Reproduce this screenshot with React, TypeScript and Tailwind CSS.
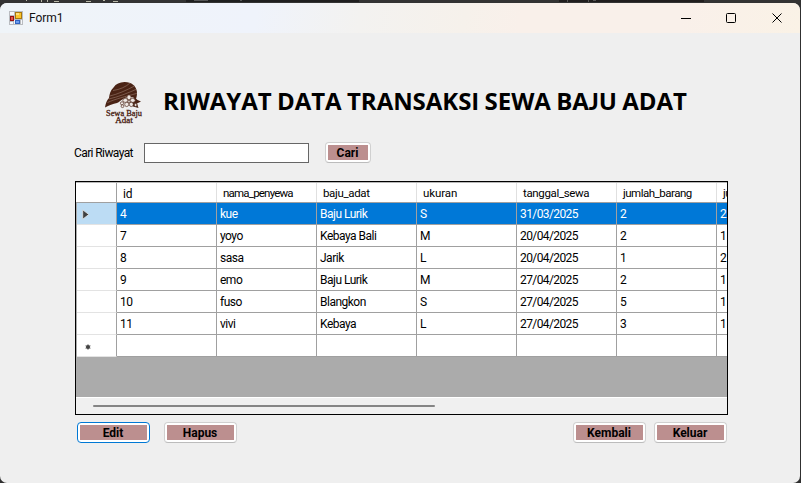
const ui = "font-['Roboto','Open_Sans',sans-serif]";

const columns = [
  { name: 'id', spacing: 'tracking-[-0.1px] text-[12px]' },
  { name: 'nama_penyewa', spacing: 'tracking-[-0.8px] text-[11.5px]' },
  { name: 'baju_adat', spacing: 'tracking-[-0.35px] text-[11.5px]' },
  { name: 'ukuran', spacing: 'tracking-[-0.1px] text-[11.5px]' },
  { name: 'tanggal_sewa', spacing: 'tracking-[-0.35px] text-[11.5px]' },
  { name: 'jumlah_barang', spacing: 'tracking-[-0.5px] text-[11.5px]' },
  { name: 'ju', spacing: 'tracking-[-0.45px] text-[11.5px]' },
];

const rows = [
  ['4', 'kue', 'Baju Lurik', 'S', '31/03/2025', '2', '2'],
  ['7', 'yoyo', 'Kebaya Bali', 'M', '20/04/2025', '2', '1'],
  ['8', 'sasa', 'Jarik', 'L', '20/04/2025', '1', '2'],
  ['9', 'emo', 'Baju Lurik', 'M', '27/04/2025', '2', '1'],
  ['10', 'fuso', 'Blangkon', 'S', '27/04/2025', '5', '1'],
  ['11', 'vivi', 'Kebaya', 'L', '27/04/2025', '3', '1'],
  ['', '', '', '', '', '', ''],
];

function FormIcon() {
  return (
    <svg width="14" height="14" viewBox="0 0 14 14" shapeRendering="crispEdges">
      <rect width="14" height="14" fill="#b9bcc0" />
      <rect x="1" y="1" width="4" height="3" fill="#f4f6fa" />
      <rect x="1" y="11" width="3" height="2" fill="#f4f6fa" />
      <rect x="12" y="9" width="1" height="4" fill="#f4f6fa" />
      <rect x="5" y="9" width="1" height="4" fill="#f4f6fa" />
      <rect x="6" y="1" width="7" height="7" fill="#a9780c" />
      <rect x="7" y="2" width="5" height="5" fill="#fbc52c" />
      <rect x="7" y="2" width="3" height="2" fill="#ffe07a" />
      <rect x="1" y="5" width="4" height="5" fill="#9c1010" />
      <rect x="2" y="6" width="2" height="3" fill="#e0564a" />
      <rect x="6" y="9" width="5" height="4" fill="#3164c0" />
      <rect x="7" y="10" width="3" height="2" fill="#6e9df0" />
    </svg>
  );
}

function Logo() {
  return (
    <svg width="40" height="46" viewBox="0 0 40 46">
      <path
        d="M1 28.5C1.6 24.5 2.6 21.5 5 19C5.5 14.5 6.5 11.5 9.5 8.5C12 5 15.5 3.3 20.5 3.1C27.5 3 32.2 7 32.9 12.5C33.2 15.5 32.8 18 31.8 20C28 17.3 23.5 17.5 19 20C16 21.7 15.5 23.3 13 24C9 25 5 26 1 28.5Z"
        fill="#4a2315"
      />
      <g fill="none" stroke="#a88d7f" strokeWidth="0.5">
        <path d="M5.8 17C13 15.5 23 11 30.5 7" />
        <path d="M4.8 20C14 18 24 14 32.3 10.3" />
        <path d="M3.5 23.5C11 20 22 17.5 33 14.3" />
        <path d="M9 11.5C16 10.5 22 7.8 26 4" />
      </g>
      <path d="M28 21.5L31 18.5L33.5 21L37 22.5L33 24.5L34.5 29L29 27.5L26 24.5Z" fill="#4a2315" />
      <g fill="#efe8e4" stroke="#4a2315" strokeWidth="0.65">
        <ellipse cx="25" cy="18.3" rx="2.1" ry="2.5" />
        <ellipse cx="28.7" cy="21.4" rx="2.5" ry="2" />
        <ellipse cx="27.3" cy="25.4" rx="2" ry="2.2" />
        <ellipse cx="22.7" cy="25.4" rx="2" ry="2.2" />
        <ellipse cx="21.3" cy="21.4" rx="2.5" ry="2" />
        <circle cx="25" cy="22.4" r="1.2" />
        <circle cx="18" cy="24.3" r="1.6" />
        <circle cx="18.5" cy="27.2" r="1.4" />
        <circle cx="31.6" cy="26" r="1.4" />
      </g>
      <g
        fill="#4a2315"
        stroke="#4a2315"
        strokeWidth="0.3"
        fontFamily="Liberation Serif, serif"
        fontSize="8"
        textAnchor="middle"
      >
        <text x="20" y="36.6" textLength="36" lengthAdjust="spacingAndGlyphs">Sewa Baju</text>
        <text x="20" y="43.9" textLength="17.5" lengthAdjust="spacingAndGlyphs">Adat</text>
      </g>
    </svg>
  );
}

function Button({ label, width, active }: { label: string; width: string; active?: boolean }) {
  return (
    <button
      className={`h-[21px] ${width} rounded-[4px] border bg-white p-[2px] ${
        active ? 'border-[#0078d4]' : 'border-[#d0d0d0] border-b-[#bcbcbc]'
      }`}
    >
      <span className="flex h-full items-center justify-center bg-[#bc8f8f] pr-px text-[12px] leading-none font-bold text-black">
        {label}
      </span>
    </button>
  );
}

function TitleBar() {
  return (
    <header className="flex h-[30px] items-center bg-[linear-gradient(100deg,#eff4f8_0%,#eff3fb_32%,#f3f2f0_45%,#f6f1eb_58%,#f9f0ea_65%,#f9f0ea_85%,#faf2e6_100%)] pl-[9px]">
      <FormIcon />
      <span className="ml-[6px] text-[12px] tracking-[-0.05px] text-[#111]">Form1</span>
      <svg className="ml-auto mr-[17px]" width="102" height="12" viewBox="0 0 102 12" fill="none" stroke="#000">
        <path d="M0 6.5H10" />
        <rect x="45.5" y="1.5" width="9" height="9" rx="1" />
        <path d="M91.5 1.5L100.5 10.5M100.5 1.5L91.5 10.5" />
      </svg>
    </header>
  );
}

function Grid() {
  return (
    <div className="ml-[75px] mt-[18px] flex h-[234px] w-[653px] flex-col overflow-hidden border border-black bg-[#ababab] text-[12px] leading-none">
      <div className="flex h-[21px] shrink-0 border-t border-b border-[#a0a0a0] border-t-[#b8b8b8] bg-white pl-px">
        <div className="w-[40px] shrink-0 border-r border-[#a0a0a0]" />
        {columns.map((c) => (
          <div
            key={c.name}
            className={`flex w-[100px] shrink-0 items-center border-r border-[#e0e0e0] pl-[6px] pt-[3px] leading-none ${c.spacing}`}
          >
            {c.name}
          </div>
        ))}
      </div>
      {rows.map((row, i) => (
        <div key={i} className="flex h-[22px] shrink-0 pl-px">
          <div
            className={`flex w-[40px] shrink-0 items-center border-r border-b border-r-[#a0a0a0] border-b-[#e3e3e3] pl-[5px] ${
              i === 0 ? 'bg-[#bcdcf4]' : 'bg-white'
            }`}
          >
            {i === 0 && (
              <svg className="mt-px" width="8" height="11" viewBox="0 0 8 11">
                <path d="M0.7 0.8L6.8 5.5L0.7 10.2Z" fill="#404040" stroke="#e6e6e6" strokeWidth="0.8" />
              </svg>
            )}
            {i === rows.length - 1 && (
              <svg className="ml-[3px] mt-[3px]" width="6" height="6" viewBox="0 0 7 7">
                <path d="M3.5 .3V6.7M.6 1.9L6.4 5.1M6.4 1.9L.6 5.1" stroke="#777" strokeWidth="1.3" />
                <circle cx="3.5" cy="3.5" r="2.4" fill="#444" />
              </svg>
            )}
          </div>
          {row.map((cell, j) => (
            <div
              key={j}
              className={`flex w-[100px] shrink-0 items-center border-r border-b border-[#a0a0a0] pl-[3px] ${
                j === 4 ? 'tracking-[-0.6px]' : 'tracking-[-0.5px]'
              } ${i === 0 ? 'bg-[#0078d7] text-white' : 'bg-white'}`}
            >
              {cell}
            </div>
          ))}
        </div>
      ))}
      <div className="mt-auto flex h-[17px] shrink-0 items-center border-t border-white bg-[#f0f0f0] pl-[17px]">
        <div className="h-[2px] w-[342px] rounded-full bg-[#858585]" />
      </div>
    </div>
  );
}

function BackdropStrip() {
  return (
    <svg className="block" width="800" height="3" viewBox="0 0 800 3" shapeRendering="crispEdges">
      <rect width="800" height="3" fill="#333" />
      <rect x="186" width="173" height="2" fill="#1f1f1f" />
      <rect x="559" width="145" height="2" fill="#201e1e" />
      <g fill="#b8b8a8">
        <rect x="26" width="1" height="1" />
        <rect x="41" width="1" height="2" />
        <rect x="47" width="1" height="2" />
        <rect x="54" y="1" width="5" height="1" />
        <rect x="86" y="1" width="5" height="1" />
        <rect x="103" width="2" height="1" />
        <rect x="113" y="1" width="5" height="1" />
      </g>
      <g fill="#555">
        <rect x="194" width="14" height="1" />
        <rect x="240" width="2" height="1" />
        <rect x="567" width="1" height="2" />
        <rect x="588" width="1" height="2" />
        <rect x="593" width="3" height="1" />
      </g>
    </svg>
  );
}

export default function App() {
  return (
    <div className={`h-[483px] w-[801px] overflow-hidden bg-[#303030] pr-px text-black ${ui}`}>
      <BackdropStrip />
      <div className="h-[480px] overflow-hidden rounded-[7px] bg-[#efefef]">
        <TitleBar />
        <div className="flex h-[92px] items-start pl-[104px] pt-[46px]">
          <Logo />
          <h1 className="ml-[19px] mt-[7px] whitespace-nowrap font-['Open_Sans','Noto_Sans',sans-serif] text-[24px] leading-[30px] font-bold tracking-[-0.05px] [word-spacing:-0.8px]">
            RIWAYAT DATA TRANSAKSI SEWA BA
            <span className="font-['Lato'] text-[23px] font-black">J</span>U ADAT
          </h1>
        </div>
        <div className="mt-[17px] flex h-[21px] items-center pl-[74px]">
          <label htmlFor="search" className="w-[70px] text-[12px] tracking-[-0.6px]">
            Cari Riwayat
          </label>
          <input id="search" className="h-[20px] w-[165px] border border-[#666] bg-white px-1 text-[12px] outline-none" />
          <div className="ml-[16px] flex">
            <Button label="Cari" width="w-[46px]" />
          </div>
        </div>
        <Grid />
        <div className="flex pl-[77px] pr-[73px] pt-[7px]">
          <Button label="Edit" width="w-[73px]" active />
          <div className="ml-[14px] flex">
            <Button label="Hapus" width="w-[73px]" />
          </div>
          <div className="ml-auto flex gap-[8px]">
            <Button label="Kembali" width="w-[73px]" />
            <Button label="Keluar" width="w-[73px]" />
          </div>
        </div>
      </div>
    </div>
  );
}
